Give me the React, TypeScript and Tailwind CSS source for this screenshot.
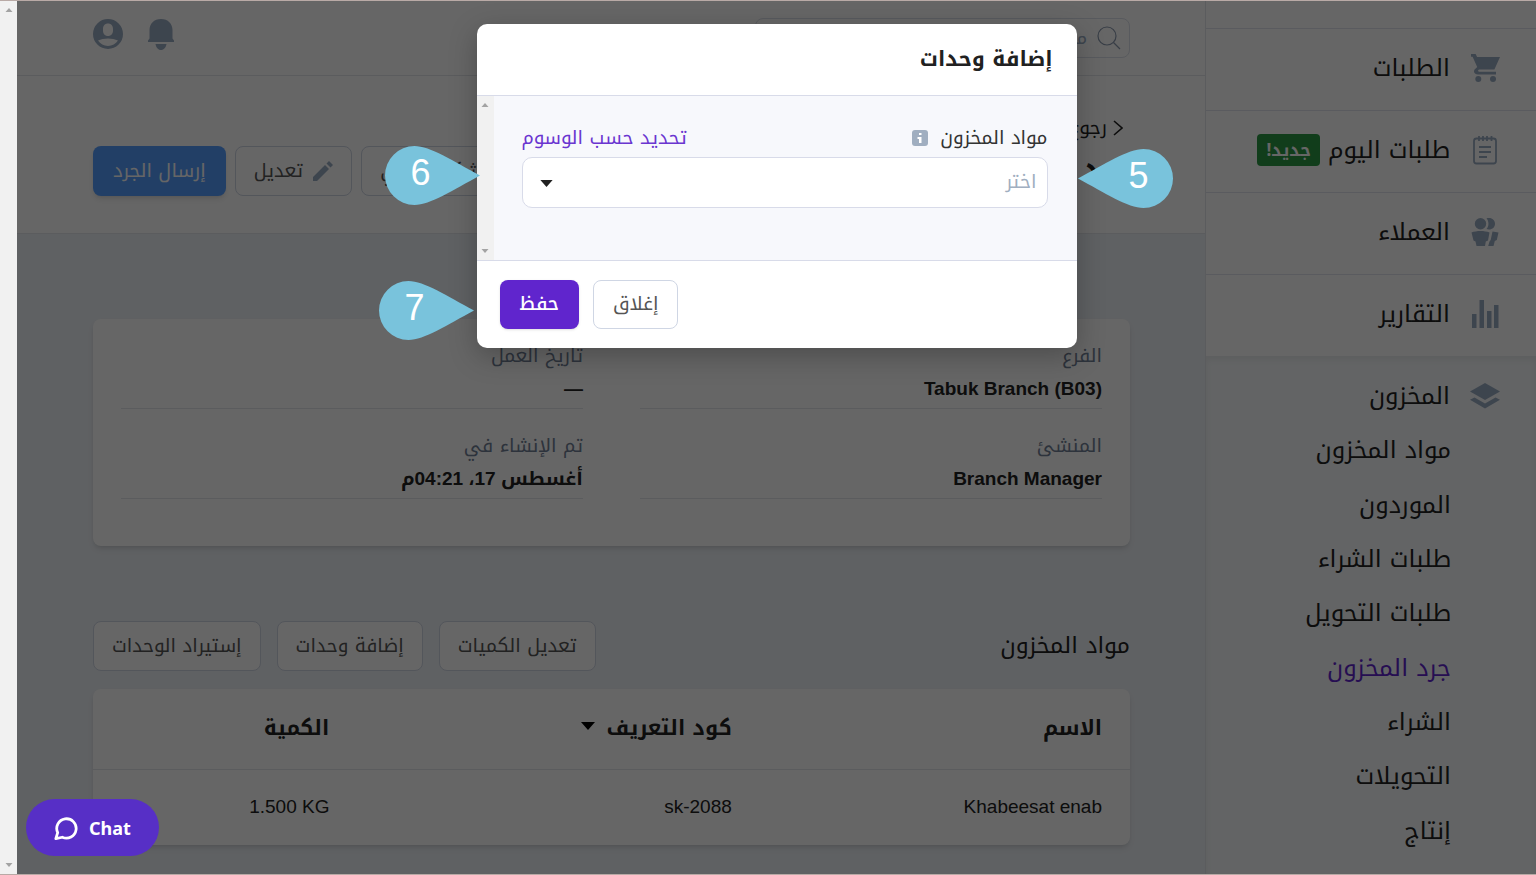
import type { ReactNode } from "react";

const subLinks = [
  "مواد المخزون",
  "الموردون",
  "طلبات الشراء",
  "طلبات التحويل",
  "جرد المخزون",
  "الشراء",
  "التحويلات",
  "إنتاج",
];

const details = [
  { label: "الفرع", value: "Tabuk Branch (B03)" },
  { label: "تاريخ العمل", value: "—" },
  { label: "المنشئ", value: "Branch Manager" },
  { label: "تم الإنشاء في", value: "أغسطس 17، 04:21م" },
];

const CartIcon = () => (
  <svg viewBox="0 0 30 30" className="h-[30px] w-[30px]" fill="currentColor">
    <path d="M1 1h4.600l1.500 3h22.900l-5.600 12.500H9.400c-1.300 0-1.800 1.500-.6 2.200.2.100.4.100.7.100H26v2.700H8c-4.300 0-5.200-4.200-2.300-6L7.200 14 2.600 3.700H1z" />
    <circle cx="8.300" cy="26" r="3" />
    <circle cx="23" cy="26" r="3" />
  </svg>
);

const NoteIcon = () => (
  <svg viewBox="0 0 30 30" className="h-[30px] w-[30px]" fill="none" stroke="currentColor" strokeWidth="1.800">
    <rect x="4" y="3.500" width="22" height="25" rx="2.500" />
    <path d="M9 1v5M13 1v5M17 1v5M21.500 1v5M9 12h12M9 17h12M9 22h8" />
  </svg>
);

const UsersIcon = () => (
  <svg viewBox="0 0 30 30" className="h-[30px] w-[30px]" fill="currentColor">
    <circle cx="10.500" cy="6.700" r="5.700" />
    <path d="M16.500 1.300c4.800-1.500 8.500 1.400 8.500 5.400s-3.700 6.900-8.500 5.400c2.600-3.200 2.600-7.600 0-10.800z" />
    <path d="M1.500 15.500c5-2 13-2 18 0l-1.500 8-2.200 1-.8 4.500H6.500L5.500 24.500l-2-1z" />
    <path d="M22.500 14.500l6 1-1.700 7.500-2 1-1.300 5h-5.300l1.300-4.500 1.200-1.500z" />
  </svg>
);

const BarsIcon = () => (
  <svg viewBox="0 0 30 30" className="h-[30px] w-[30px]" fill="currentColor">
    <path d="M2 15h4.500v14H2zM9.500 1H14v28H9.500zM17 12h4.500v17H17zM24 6h4.500v23H24z" />
  </svg>
);

const LayersIcon = () => (
  <svg viewBox="0 0 30 30" className="h-[30px] w-[30px]" fill="currentColor">
    <path d="M15 2l15 8.500L15 19 0 10.500z" />
    <path d="M4.500 16.500L15 22.500l10.500-6 4.500 2.300-15 8.700-15-8.700z" />
  </svg>
);

const menu = [
  { name: "الطلبات", icon: <CartIcon /> },
  { name: "طلبات اليوم", icon: <NoteIcon />, badge: "جديد!" },
  { name: "العملاء", icon: <UsersIcon /> },
  { name: "التقارير", icon: <BarsIcon /> },
];

function Caret({ className }: { className: string }) {
  return (
    <svg viewBox="0 0 14 8" className={className} fill="currentColor">
      <path d="M0 0h14L7 8z" />
    </svg>
  );
}

function ScrollTrack() {
  return (
    <div className="flex w-[17px] shrink-0 flex-col items-center justify-between bg-[#f1f1f1] py-[7px] text-[#a3a3a3]">
      <Caret className="h-1 w-2 rotate-180" />
      <Caret className="h-1 w-2" />
    </div>
  );
}

function OutlineButton({ children }: { children: ReactNode }) {
  return (
    <button className="flex h-[50px] shrink-0 items-center gap-2.5 rounded-lg border border-[#cfd6e4] bg-white px-[18px] text-[19px] whitespace-nowrap text-[#555]">
      {children}
    </button>
  );
}

// numbered drop that points at a control of the dialog
function Callout({ n, left, className }: { n: number; left?: boolean; className: string }) {
  return (
    <div dir="ltr" className={`absolute h-[59px] w-[95px] ${className}`}>
      <svg viewBox="0 0 95 59" className={`h-full w-full ${left ? "-scale-x-100" : ""}`} fill="#79c3dc">
        <path d="M95 29.500C68 15 45 0 29.500 0a29.500 29.500 0 0 0 0 59C45 59 68 44 95 29.500z" />
      </svg>
      <span
        className={`absolute inset-y-0 text-center font-['Liberation_Sans',sans-serif] text-4xl leading-[54px] text-white ${
          left ? "right-0 w-[68px]" : "left-0 w-[72px]"
        }`}
      >
        {n}
      </span>
    </div>
  );
}

function Sidebar() {
  return (
    <aside className="flex w-[331px] shrink-0 flex-col border-l border-[#e3e5ea] bg-white text-2xl text-[#212121]">
      <div className="h-[27px] shrink-0" />
      <nav className="flex flex-1 flex-col">
        {menu.map((item) => (
          <a
            key={item.name}
            href="#"
            className="flex h-[82px] shrink-0 items-center border-t border-[#e0e3ee] pr-9 pb-1 leading-10"
          >
            <span className="text-[#9aacc2]">{item.icon}</span>
            <span className="mr-5">{item.name}</span>
            {item.badge && (
              <span className="mr-2 h-8 rounded bg-[#2b9944] px-[9px] text-[17px] leading-8 font-bold text-white">
                {item.badge}
              </span>
            )}
          </a>
        ))}
        <div className="flex-1 bg-[#f7fafc] shadow-[inset_0_4px_6px_rgba(0,0,0,0.06)]">
          <a href="#" className="flex h-20 items-center pr-9 leading-10">
            <span className="text-[#9aacc2]">
              <LayersIcon />
            </span>
            <span className="mr-5">المخزون</span>
          </a>
          <div className="-mt-[13px] flex h-[435px] flex-col pr-[85px]">
            {subLinks.map((name) => (
              <a
                key={name}
                href="#"
                className={`flex flex-1 items-center ${name === "جرد المخزون" ? "text-[#6025cd]" : ""}`}
              >
                {name}
              </a>
            ))}
          </div>
        </div>
      </nav>
    </aside>
  );
}

function TopBar() {
  return (
    <header className="flex h-[75px] items-center justify-between border-b border-[#e3e5ea] bg-white pr-[75px] pl-[76px]">
      <label className="flex h-10 w-[375px] items-center gap-2.5 rounded-lg border border-[#dde1ea] px-2">
        <svg viewBox="0 0 24 24" className="h-6 w-6" fill="none" stroke="#8d9bb0" strokeWidth="1.200">
          <circle cx="10" cy="10" r="9" />
          <path d="M16.500 16.500L23 23" />
        </svg>
        <input
          aria-label="بحث"
          placeholder="ما الذي تبحث عنه؟"
          className="min-w-0 flex-1 text-lg outline-none placeholder:text-[#9aacc2]"
        />
      </label>
      <div className="flex items-center gap-[25px] pb-2 text-[#9aacc2]">
        <button aria-label="الإشعارات">
          <svg viewBox="0 0 26 31" className="h-[31px] w-[26px]" fill="currentColor">
            <path d="M13 0c7 0 11.500 4.800 11.500 11v8.500l1.500 2V23H0v-1.500l1.500-2V11C1.500 4.800 6 0 13 0zM7.500 25h11c-.6 3.600-2.600 6-5.500 6s-4.900-2.400-5.500-6z" />
          </svg>
        </button>
        <button aria-label="الحساب">
          <svg viewBox="0 0 30 30" className="h-[30px] w-[30px]" fill="currentColor" fillRule="evenodd">
            <path d="M15 0a15 15 0 1 1 0 30 15 15 0 0 1 0-30zm0 4.500c-3 0-5 2.200-5 5.500v1.500c0 3.300 2 5.500 5 5.500s5-2.200 5-5.500V10c0-3.300-2-5.500-5-5.500zM5 21.500c2.300 3.200 5.800 5.500 10 5.500s7.700-2.300 10-5.500c-5.500-2.700-14.500-2.700-20 0z" />
          </svg>
        </button>
      </div>
    </header>
  );
}

function PageHead() {
  return (
    <div className="flex h-[158px] items-start justify-between border-b border-[#e3e5ea] bg-white pr-[75px] pl-[76px]">
      <div className="pt-[37px]">
        <a href="#" className="flex h-[30px] items-center gap-1.5 pr-[7px] text-[19px] text-[#212121]">
          <svg viewBox="0 0 10 16" className="h-4 w-2.5" fill="none" stroke="currentColor" strokeWidth="1.600">
            <path d="M1 1l8 7-8 7" />
          </svg>
          رجوع
        </a>
        <h1 className="text-[28px] leading-[54px] font-bold">جرد المخزون</h1>
      </div>
      <div className="flex gap-[9px] pt-[70px]">
        <OutlineButton>حذف بشكل نهائي</OutlineButton>
        <OutlineButton>
          <svg viewBox="0 0 20 20" className="h-5 w-5" fill="#9aacc2">
            <path d="M0 16L12 4l4 4L4 20H0zM13.500 2.500L16 0l4 4-2.500 2.500z" />
          </svg>
          تعديل
        </OutlineButton>
        <button className="h-[50px] rounded-lg bg-[#559eff] px-5 text-[19px] whitespace-nowrap text-white shadow-md">
          إرسال الجرد
        </button>
      </div>
    </div>
  );
}

function Modal() {
  return (
    <div
      role="dialog"
      aria-labelledby="dialog-title"
      className="relative h-fit w-[600px] rounded-[10px] bg-white shadow-[0_8px_28px_rgba(0,0,0,0.25)]"
    >
      <h2 id="dialog-title" className="h-[71px] px-6 text-[21px] leading-[70px] font-bold text-[#212121]">
        إضافة وحدات
      </h2>
      <div className="flex border-y border-[#d8dbe9] bg-[#f7f8fc]">
        <div className="flex-1 pt-[27px] pr-[29px] pb-[52px] pl-7">
          <div className="mb-1 flex h-[30px] items-center text-[19px] text-[#333]">
            <label htmlFor="items">مواد المخزون</label>
            <svg viewBox="0 0 16 16" className="mr-3 h-4 w-4">
              <rect width="16" height="16" rx="3" fill="#a0aec0" />
              <path d="M7 3h2.500v2H7zM5.500 7h4v6H7V9H5.500z" fill="#fff" />
            </svg>
            <button className="mr-auto text-[#6a35d0]">تحديد حسب الوسوم</button>
          </div>
          <div className="relative">
            <select
              id="items"
              className="h-[51px] w-full appearance-none rounded-[10px] border border-[#d8dbe9] bg-white px-2.5 text-[19px] text-[#a0aec0]"
            >
              <option>اختر</option>
            </select>
            <Caret className="pointer-events-none absolute top-[23px] left-[18px] h-[7px] w-[13px] text-[#212121]" />
          </div>
        </div>
        <ScrollTrack />
      </div>
      <div className="flex h-[87px] flex-row-reverse items-center gap-3.5 px-[23px]">
        <button className="h-[49px] rounded-lg bg-[#6025cd] px-5 text-[19px] font-medium text-white shadow-sm">
          حفظ
        </button>
        <button className="h-[49px] rounded-lg border border-[#cfd6e4] bg-white px-[19px] text-[19px] text-[#555]">
          إغلاق
        </button>
      </div>

      <Callout n={5} left className="top-[125px] left-[601px]" />
      <Callout n={6} className="top-[122px] -left-[92px]" />
      <Callout n={7} className="top-[257px] -left-[98px]" />
    </div>
  );
}

export default function App() {
  return (
    <div
      dir="rtl"
      className="flex h-screen overflow-hidden border-y border-[#b9aaa6] font-['Noto_Kufi_Arabic','Liberation_Sans',sans-serif]"
    >
      <div className="relative flex min-w-0 flex-1 overflow-hidden">
        <Sidebar />
        <main className="min-w-0 flex-1 bg-[#eef2f7] text-[#212121]">
          <TopBar />
          <PageHead />

          <div className="pt-[85px] pr-[75px] pl-[76px]">
            <dl className="grid grid-cols-2 gap-x-[57px] gap-y-[22px] rounded-lg bg-white px-7 pt-[22px] pb-[47px] shadow-md">
              {details.map((item) => (
                <div key={item.label} className="border-b border-[#e3e5ea]">
                  <dt className="text-[19px] leading-[30px] text-[#718096]">{item.label}</dt>
                  <dd className="h-[37px] font-['Liberation_Sans','Noto_Kufi_Arabic',sans-serif] text-[19px] leading-[35px] font-bold">
                    {item.value}
                  </dd>
                </div>
              ))}
            </dl>

            <div className="mt-[75px] flex items-center justify-between">
              <h2 className="text-[23px] leading-[50px]">مواد المخزون</h2>
              <div className="flex gap-4">
                <OutlineButton>تعديل الكميات</OutlineButton>
                <OutlineButton>إضافة وحدات</OutlineButton>
                <OutlineButton>إستيراد الوحدات</OutlineButton>
              </div>
            </div>

            <div className="mt-[18px] rounded-lg bg-white shadow-md">
              <table className="w-full table-fixed text-right">
                <thead>
                  <tr className="h-20 border-b border-[#e3e5ea] text-[21px]">
                    <th className="w-[35.7%] px-7">الاسم</th>
                    <th className="w-[38.8%] px-7">
                      <button className="flex items-center gap-3">
                        كود التعريف
                        <Caret className="mb-1.5 h-2 w-3.5 text-black" />
                      </button>
                    </th>
                    <th className="px-7">الكمية</th>
                  </tr>
                </thead>
                <tbody className="font-['Liberation_Sans',sans-serif]">
                  <tr className="h-[76px] text-[19px]">
                    <td className="px-7">Khabeesat enab</td>
                    <td className="px-7">sk-2088</td>
                    <td className="px-7">
                      <bdi>1.500 KG</bdi>
                    </td>
                  </tr>
                </tbody>
              </table>
            </div>
          </div>
        </main>

        <div className="absolute inset-0 flex items-start justify-center bg-black/60 pt-[23px]">
          <Modal />
        </div>
      </div>

      <ScrollTrack />

      <button
        dir="ltr"
        className="fixed bottom-[19px] left-[26px] flex h-[57px] w-[133px] items-center justify-center gap-[11px] rounded-full bg-[#572fc6] font-['Noto_Sans',sans-serif] text-lg font-bold text-white"
      >
        <svg viewBox="0 0 26 26" className="h-6 w-6" fill="none" stroke="currentColor" strokeWidth="3" strokeLinejoin="round">
          <path d="M2 24.500l2-6.500A10.500 10.500 0 1 1 9 23z" />
        </svg>
        Chat
      </button>
    </div>
  );
}
